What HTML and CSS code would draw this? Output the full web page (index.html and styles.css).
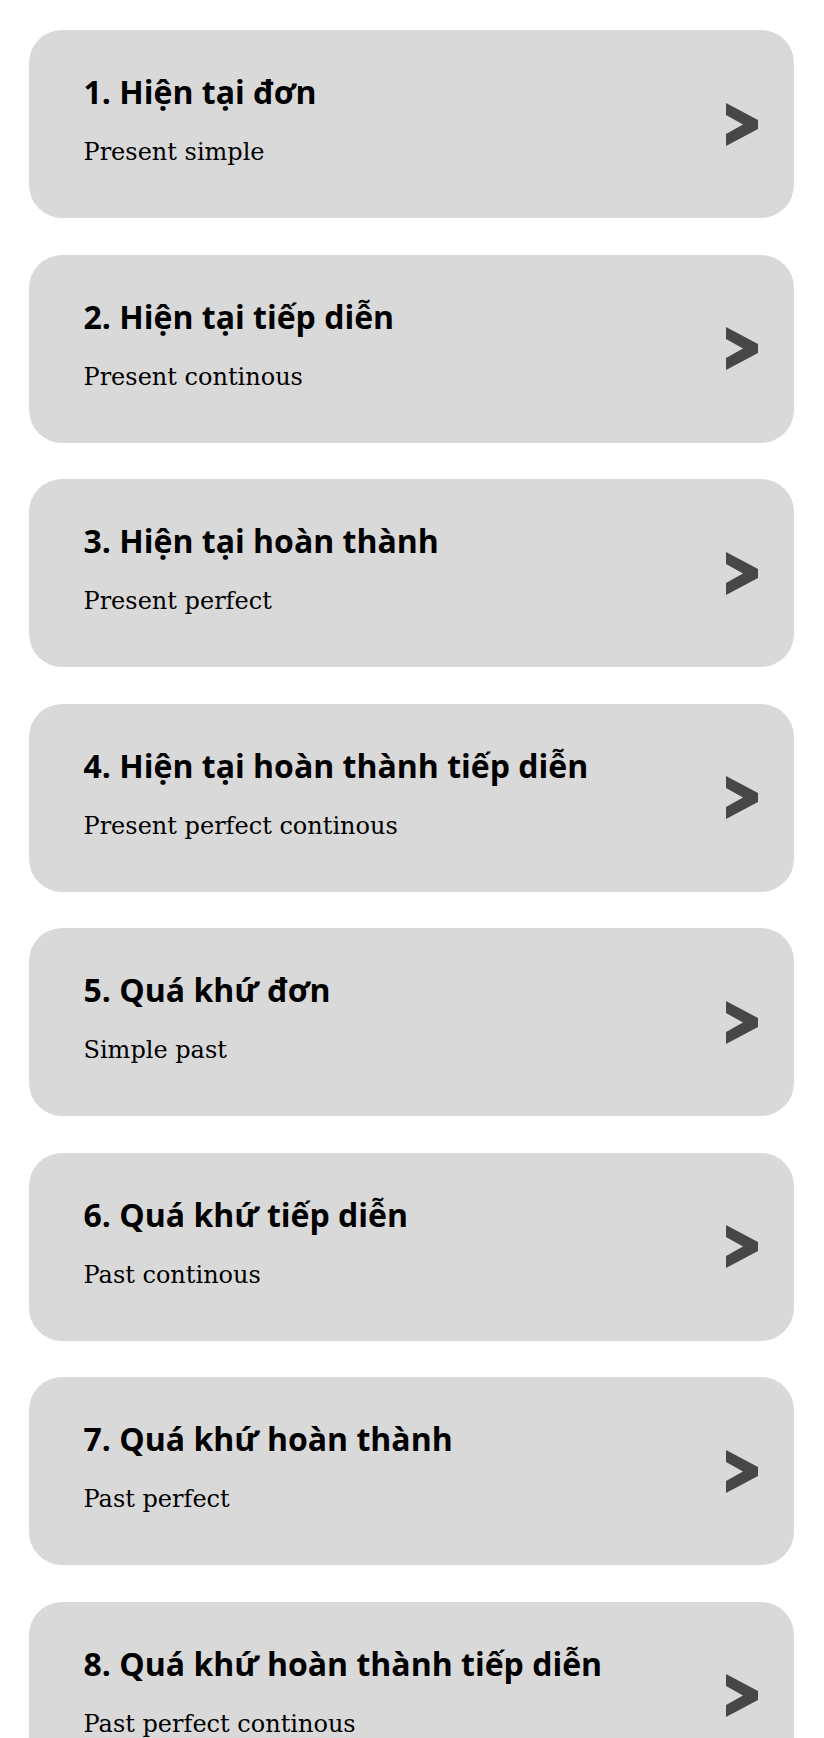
FILE: index.html
```html
<!DOCTYPE html>
<html lang="vi">
<head>
<meta charset="utf-8">
<title>Tenses</title>
<link rel="stylesheet" href="styles.css">
</head>
<body>
<main class="list">
  <a class="card" href="#"><div class="text"><h2 class="title">1. Hiện tại đơn</h2><p class="sub">Present simple</p></div><svg class="chev" viewBox="0 0 32 43"><polygon points="0,0 32,17 32,26 0,43 0,31 17,21.5 0,12"/></svg></a>
  <a class="card" href="#"><div class="text"><h2 class="title">2. Hiện tại tiếp diễn</h2><p class="sub">Present continous</p></div><svg class="chev" viewBox="0 0 32 43"><polygon points="0,0 32,17 32,26 0,43 0,31 17,21.5 0,12"/></svg></a>
  <a class="card" href="#"><div class="text"><h2 class="title">3. Hiện tại hoàn thành</h2><p class="sub">Present perfect</p></div><svg class="chev" viewBox="0 0 32 43"><polygon points="0,0 32,17 32,26 0,43 0,31 17,21.5 0,12"/></svg></a>
  <a class="card" href="#"><div class="text"><h2 class="title">4. Hiện tại hoàn thành tiếp diễn</h2><p class="sub">Present perfect continous</p></div><svg class="chev" viewBox="0 0 32 43"><polygon points="0,0 32,17 32,26 0,43 0,31 17,21.5 0,12"/></svg></a>
  <a class="card" href="#"><div class="text"><h2 class="title">5. Quá khứ đơn</h2><p class="sub">Simple past</p></div><svg class="chev" viewBox="0 0 32 43"><polygon points="0,0 32,17 32,26 0,43 0,31 17,21.5 0,12"/></svg></a>
  <a class="card" href="#"><div class="text"><h2 class="title">6. Quá khứ tiếp diễn</h2><p class="sub">Past continous</p></div><svg class="chev" viewBox="0 0 32 43"><polygon points="0,0 32,17 32,26 0,43 0,31 17,21.5 0,12"/></svg></a>
  <a class="card" href="#"><div class="text"><h2 class="title">7. Quá khứ hoàn thành</h2><p class="sub">Past perfect</p></div><svg class="chev" viewBox="0 0 32 43"><polygon points="0,0 32,17 32,26 0,43 0,31 17,21.5 0,12"/></svg></a>
  <a class="card" href="#"><div class="text"><h2 class="title">8. Quá khứ hoàn thành tiếp diễn</h2><p class="sub">Past perfect continous</p></div><svg class="chev" viewBox="0 0 32 43"><polygon points="0,0 32,17 32,26 0,43 0,31 17,21.5 0,12"/></svg></a>
</main>
</body>
</html>
```
FILE: styles.css
```css
html, body {
  margin: 0;
  padding: 0;
  background: #ffffff;
}
.list {
  display: flex;
  flex-direction: column;
  gap: 36.5px;
  padding: 30px 30px 40px 28.5px;
}
.card {
  display: flex;
  align-items: center;
  justify-content: space-between;
  height: 188px;
  box-sizing: border-box;
  padding: 0 36px 0 55px;
  background: #d9d9d9;
  border-radius: 33px;
  text-decoration: none;
  color: #000;
}
.text {
  align-self: flex-start;
  padding-top: 40px;
}
.title {
  margin: 0;
  font-family: "Open Sans", "Noto Sans", sans-serif;
  font-weight: 700;
  font-size: 32px;
  line-height: 44px;
  color: #000;
}
.sub {
  margin: 24px 0 0;
  font-family: "DejaVu Serif", serif;
  font-weight: 400;
  font-size: 24px;
  line-height: 28px;
  color: #000;
}
.chev {
  width: 32px;
  height: 43px;
  flex: none;
  fill: #474747;
}
```
